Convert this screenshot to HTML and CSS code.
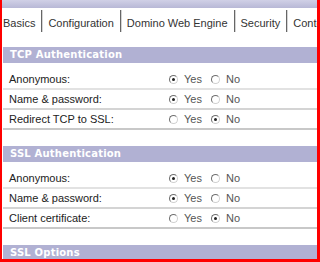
FILE: index.html
```html
<!DOCTYPE html>
<html lang="en">
<head>
    <meta charset="UTF-8">
    <meta name="viewport" content="width=device-width, initial-scale=1.0">
    <title>Server Settings - Security</title>
    <link rel="stylesheet" href="styles.css">
</head>
<body>
    <div class="frame">
        <div class="topbar"></div>
        <div class="tabs">
            <span class="tab">Basics</span>
            <span class="tab">Configuration</span>
            <span class="tab">Domino Web Engine</span>
            <span class="tab active">Security</span>
            <span class="tab">Content</span>
        </div>

        <div class="section">
            <div class="section-title">TCP Authentication</div>
            <div class="row">
                <span class="label">Anonymous:</span>
                <span class="choice"><span class="radio on"></span>Yes</span>
                <span class="choice"><span class="radio"></span>No</span>
            </div>
            <div class="row">
                <span class="label">Name &amp; password:</span>
                <span class="choice"><span class="radio on"></span>Yes</span>
                <span class="choice"><span class="radio"></span>No</span>
            </div>
            <div class="row">
                <span class="label">Redirect TCP to SSL:</span>
                <span class="choice"><span class="radio"></span>Yes</span>
                <span class="choice"><span class="radio on"></span>No</span>
            </div>
        </div>

        <div class="section">
            <div class="section-title">SSL Authentication</div>
            <div class="row">
                <span class="label">Anonymous:</span>
                <span class="choice"><span class="radio on"></span>Yes</span>
                <span class="choice"><span class="radio"></span>No</span>
            </div>
            <div class="row">
                <span class="label">Name &amp; password:</span>
                <span class="choice"><span class="radio on"></span>Yes</span>
                <span class="choice"><span class="radio"></span>No</span>
            </div>
            <div class="row">
                <span class="label">Client certificate:</span>
                <span class="choice"><span class="radio"></span>Yes</span>
                <span class="choice"><span class="radio on"></span>No</span>
            </div>
        </div>

        <div class="section">
            <div class="section-title">SSL Options</div>
        </div>
    </div>
</body>
</html>
```

FILE: styles.css
```css
body {
    margin: 0;
    padding: 0;
    background: #fff;
    font-family: "Liberation Sans", Arial, sans-serif;
    font-size: 11px;
}
.frame {
    width: 320px;
    height: 262px;
    box-sizing: border-box;
    border-left: 2px solid #f00;
    border-right: 3px solid #f00;
    border-bottom: 3px solid #f00;
    overflow: hidden;
    background: #fff;
}
.topbar {
    height: 8px;
    background: linear-gradient(to bottom, #d0d0e6, #b8b8d6);
}
.tabs {
    display: flex;
    align-items: flex-end;
    height: 24px;
    padding-left: 1px;
    white-space: nowrap;
}
.tab {
    flex-shrink: 0;
    height: 22px;
    box-sizing: border-box;
    padding: 7px 6px 2px;
    line-height: 13px;
    color: #333;
    border-right: 1px solid #666;
    box-shadow: 1px 0 0 #d4d4d4;
}
.tab:first-child {
    padding-left: 0;
}
.section {
    margin: 15px 0 0 1px;
}
.section + .section {
    margin-top: 16px;
}
.section-title {
    height: 16px;
    line-height: 16px;
    padding-left: 7px;
    background: #b1b1d3;
    color: #fff;
    font-family: "DejaVu Sans", Verdana, sans-serif;
    font-weight: bold;
    font-size: 10px;
    letter-spacing: 0.2px;
}
.section-title + .row {
    margin-top: 7px;
}
.row {
    display: flex;
    align-items: center;
    height: 18px;
    line-height: 18px;
    border-bottom: 2px solid #e2e2e2;
}
.row:nth-child(3) {
    border-bottom-color: #d4d4d4;
}
.row:nth-child(4) {
    border-bottom-color: #c8c8c8;
}
.label {
    width: 160px;
    padding-left: 6px;
    color: #222;
}
.choice {
    display: inline-flex;
    align-items: center;
    color: #555;
}
.choice + .choice {
    margin-left: 9px;
}
.radio {
    position: relative;
    width: 9px;
    height: 9px;
    box-sizing: border-box;
    margin-right: 6px;
    border-radius: 50%;
    border: 1px solid;
    border-color: #6f6f6f #d0d0d0 #d0d0d0 #6f6f6f;
    background: #fff;
}
.radio.on::after {
    content: "";
    position: absolute;
    left: 2px;
    top: 2px;
    width: 3px;
    height: 3px;
    border-radius: 50%;
    background: #222;
}
```
